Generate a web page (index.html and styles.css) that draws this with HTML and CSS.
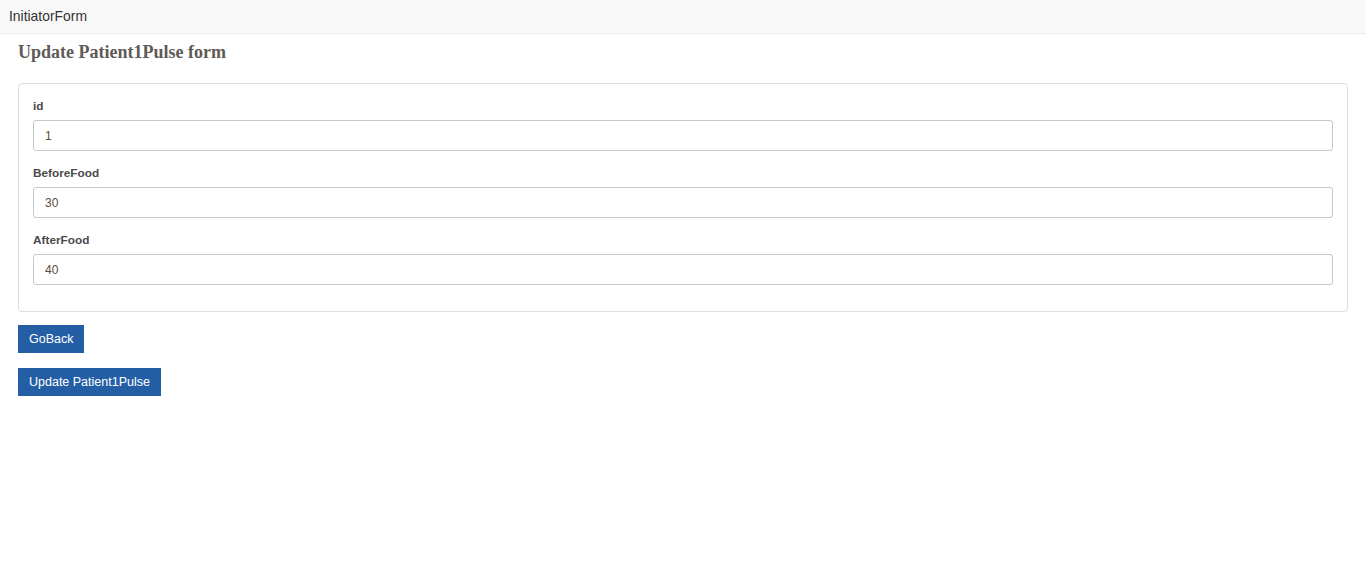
FILE: index.html
```html
<!DOCTYPE html>
<html>
<head>
<meta charset="utf-8">
<link rel="stylesheet" href="styles.css">
</head>
<body>
<nav class="navbar"><span class="brand">InitiatorForm</span></nav>
<main class="content">
  <h3 class="title">Update Patient1Pulse form</h3>
  <div class="panel">
    <div class="group">
      <label class="label">id</label>
      <input class="input" value="1">
    </div>
    <div class="group">
      <label class="label">BeforeFood</label>
      <input class="input" value="30">
    </div>
    <div class="group">
      <label class="label">AfterFood</label>
      <input class="input" value="40">
    </div>
  </div>
  <div class="actions">
    <button class="btn">GoBack</button>
    <button class="btn">Update Patient1Pulse</button>
  </div>
</main>
</body>
</html>
```
FILE: styles.css
```css
* { box-sizing: border-box; }
html, body { margin: 0; padding: 0; background: #fff; }
body { font-family: "Liberation Sans", Arial, sans-serif; font-size: 12px; color: #333; }
.navbar {
  height: 34px;
  background: #f8f8f8;
  border-bottom: 1px solid #ececec;
  display: flex;
  align-items: center;
  padding-left: 9px;
  padding-bottom: 2px;
}
.brand { font-size: 13.9px; color: #333; }
.content { padding: 0 18px; }
.title {
  font-family: "Liberation Serif", "Times New Roman", serif;
  font-weight: bold;
  font-size: 18px;
  color: #5f5a56;
  margin: 8px 0 0 0;
  line-height: 20px;
}
.panel {
  margin-top: 21px;
  border: 1px solid #ddd;
  border-radius: 4px;
  padding: 14px 14px 26px 14px;
  display: flex;
  flex-direction: column;
  gap: 14px;
}
.group { display: flex; flex-direction: column; }
.label {
  font-weight: bold;
  font-size: 11.8px;
  color: #4a4a4a;
  line-height: 16px;
  margin-bottom: 6px;
}
.input {
  height: 31px;
  border: 1px solid #c8c8c8;
  border-radius: 3px;
  padding: 0 11px;
  font-family: "Liberation Sans", Arial, sans-serif;
  font-size: 12px;
  color: #5c4a3e;
  background: #fff;
  outline: none;
}
.actions {
  display: flex;
  flex-direction: column;
  align-items: flex-start;
  gap: 15px;
  margin-top: 13px;
}
.btn {
  height: 28px;
  padding: 0 11px;
  background: #245fa6;
  color: #fff;
  border: none;
  border-radius: 0;
  font-family: "Liberation Sans", Arial, sans-serif;
  font-size: 12.5px;
  cursor: pointer;
}
```
